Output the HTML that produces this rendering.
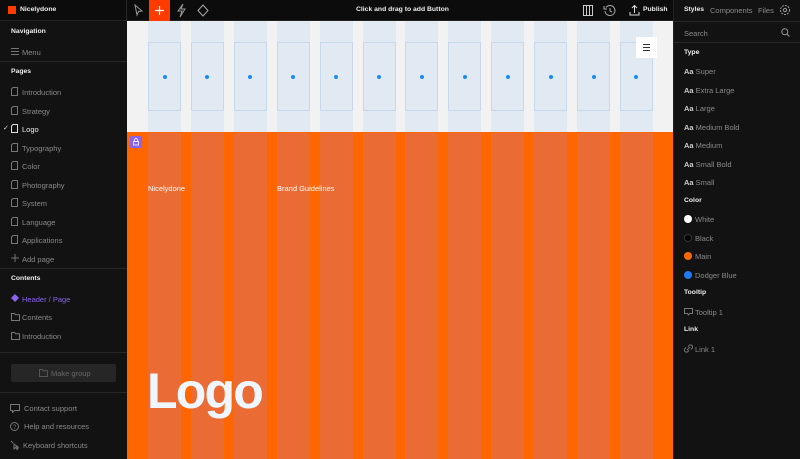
<!DOCTYPE html>
<html><head><meta charset="utf-8"><style>
*{margin:0;padding:0;box-sizing:border-box}
body{width:800px;height:459px;overflow:hidden;background:#111;font-family:"Liberation Sans",sans-serif;position:relative;color:#8a8a8a;font-size:7.5px}
.a{position:absolute}
.top{left:0;top:0;width:800px;height:21px;background:#0c0c0c;border-bottom:1px solid #222}
.side{left:0;top:22px;width:127px;height:437px;background:#121212}
.right{left:673px;top:0;width:127px;height:459px;background:#121212;border-left:1px solid #222}
.h{color:#eee;font-weight:bold;font-size:6.8px}
.it{font-size:7.5px;color:#8a8a8a;white-space:nowrap}
.sep{height:1px;background:#262626;position:absolute}
svg{position:absolute}
.col1{position:absolute;top:21px;height:111px;width:33px;background:#e1e9f2}
.box{position:absolute;top:42px;height:69px;width:33px;border:1px solid #c6d8ec}
.dot{position:absolute;top:75px;width:4px;height:4px;border-radius:50%;background:#1a8cf0}
.col2{position:absolute;top:133px;height:326px;width:33px;background:#eb6b35}
.sw{position:absolute;width:8px;height:8px;border-radius:50%}
</style></head><body>
<div class="a top"></div>
<div class="a" style="left:8px;top:6px;width:8px;height:8px;background:#ff3b00"></div>
<div class="a h" style="left:20px;top:6px">Nicelydone</div>
<div class="a" style="left:126px;top:0;width:1px;height:21px;background:#2a2a2a"></div>
<svg style="left:133px;top:4px" width="11" height="13" viewBox="0 0 11 13"><path d="M2 1 L9 7 L5.5 7.5 L4 11 Z" fill="none" stroke="#999" stroke-width="1"/></svg>
<div class="a" style="left:149px;top:0;width:21px;height:21px;background:#ff3b00"></div>
<svg style="left:154px;top:5px" width="11" height="11"><path d="M5.5 1v9M1 5.5h9" stroke="#fff" stroke-width="1.2"/></svg>
<svg style="left:176px;top:3px" width="11" height="15" viewBox="0 0 11 15"><path d="M7 1 L2 8 H6 L4 14 L9 6 H5 Z" fill="none" stroke="#999" stroke-width="1"/></svg>
<svg style="left:197px;top:4px" width="12" height="13"><path d="M6 1 L11 6.5 L6 12 L1 6.5 Z" fill="none" stroke="#aaa" stroke-width="1"/></svg>
<div class="a h" style="left:356px;top:6px">Click and drag to add Button</div>
<svg style="left:583px;top:5px" width="10" height="11"><rect x="0.5" y="0.5" width="9" height="10" fill="none" stroke="#ccc"/><path d="M3.5 0.5v10M6.5 0.5v10" stroke="#ccc"/></svg>
<svg style="left:603px;top:4px" width="13" height="13" viewBox="0 0 13 13"><path d="M3 3.5 A5 5 0 1 1 2 7" fill="none" stroke="#aaa"/><path d="M1 2v3h3" fill="none" stroke="#aaa"/><path d="M7 4v3l2 1" fill="none" stroke="#aaa"/></svg>
<svg style="left:629px;top:4px" width="11" height="12"><path d="M5.5 9V1.5M3 4l2.5-2.5L8 4M1 8v3h9V8" fill="none" stroke="#ddd" stroke-width="1"/></svg>
<div class="a h" style="left:643px;top:6px">Publish</div>

<div class="a side"></div>
<div class="a h" style="left:11px;top:28px">Navigation</div>
<svg style="left:11px;top:48px" width="8" height="7"><path d="M0 .5h8M0 3.5h8M0 6.5h8" stroke="#777"/></svg>
<div class="a it" style="left:22px;top:48px">Menu</div>
<div class="sep" style="left:0;top:61px;width:127px"></div>
<div class="a h" style="left:11px;top:68px">Pages</div>
<div id="pages"></div>
<div class="sep" style="left:0;top:268px;width:127px"></div>
<div class="a h" style="left:11px;top:275px">Contents</div>
<svg style="left:11px;top:294px" width="8" height="8"><path d="M4 0L8 4L4 8L0 4Z" fill="#8a63f0"/></svg>
<div class="a it" style="left:22px;top:295px;color:#8a63f0">Header / Page</div>
<svg style="left:11px;top:313px" width="9" height="8"><path d="M.5 .5h3l1 1.2h4v5.8h-8Z" fill="none" stroke="#777"/></svg>
<div class="a it" style="left:22px;top:313px">Contents</div>
<svg style="left:11px;top:332px" width="9" height="8"><path d="M.5 .5h3l1 1.2h4v5.8h-8Z" fill="none" stroke="#777"/></svg>
<div class="a it" style="left:22px;top:332px">Introduction</div>
<div class="sep" style="left:0;top:352px;width:127px"></div>
<div class="a" style="left:11px;top:364px;width:105px;height:18px;background:#262626;border-radius:2px"></div>
<svg style="left:39px;top:369px" width="9" height="8"><path d="M.5 .5h3l1 1.2h4v5.8h-8Z" fill="none" stroke="#555"/></svg>
<div class="a it" style="left:51px;top:369px;color:#666">Make group</div>
<div class="sep" style="left:0;top:392px;width:127px"></div>
<svg style="left:10px;top:404px" width="10" height="9"><path d="M.5 .5h9v6h-5l-2 2v-2h-2Z" fill="none" stroke="#777"/></svg>
<div class="a it" style="left:24px;top:404px">Contact support</div>
<svg style="left:10px;top:422px" width="9" height="9"><circle cx="4.5" cy="4.5" r="4" fill="none" stroke="#777"/><text x="3" y="7" font-size="6" fill="#777">?</text></svg>
<div class="a it" style="left:24px;top:422px">Help and resources</div>
<svg style="left:10px;top:440px" width="9" height="10"><path d="M1 1l2 2M4 4v5l1.5-1.5L7 9.5l1-1-1.5-1.5H8Z" fill="none" stroke="#777"/></svg>
<div class="a it" style="left:23px;top:441px">Keyboard shortcuts</div>

<div class="a" style="left:127px;top:21px;width:546px;height:111px;background:#f2f2f2"></div>
<div class="a" style="left:127px;top:132px;width:546px;height:327px;background:#ff6600"></div>
<div id="grid"></div>
<div class="a" style="left:636px;top:37px;width:21px;height:21px;background:#fff"></div>
<svg style="left:643px;top:44px" width="7" height="7"><path d="M0 .5h7M0 3.5h7M0 6.5h7" stroke="#333"/></svg>
<div class="a" style="left:130px;top:136px;width:12px;height:12px;background:#8a63f0;border-radius:2px"></div>
<svg style="left:133px;top:138px" width="6" height="8"><path d="M1.5 3.5V2a1.5 1.5 0 013 0v1.5" fill="none" stroke="#fff" stroke-width=".8"/><rect x=".5" y="3.5" width="5" height="3.5" fill="none" stroke="#fff" stroke-width=".8"/></svg>
<div class="a" style="left:148px;top:184px;color:#fff;font-size:7.5px">Nicelydone</div>
<div class="a" style="left:277px;top:184px;color:#fff;font-size:7.5px">Brand Guidelines</div>
<div class="a" style="left:147px;top:362px;color:#eef6ff;font-size:50px;font-weight:bold;letter-spacing:-1.8px">Logo</div>

<div class="a right"></div>
<div class="a h" style="left:684px;top:6px">Styles</div>
<div class="a it" style="left:710px;top:6px">Components</div>
<div class="a it" style="left:758px;top:6px">Files</div>
<svg style="left:779px;top:4px" width="12" height="12"><circle cx="6" cy="6" r="4.5" fill="none" stroke="#999" stroke-dasharray="2 1"/><circle cx="6" cy="6" r="1.6" fill="none" stroke="#999"/></svg>
<div class="sep" style="left:674px;top:21px;width:126px"></div>
<div class="a it" style="left:684px;top:29px">Search</div>
<svg style="left:781px;top:28px" width="9" height="9"><circle cx="3.8" cy="3.8" r="3" fill="none" stroke="#999"/><path d="M6 6l2.5 2.5" stroke="#999"/></svg>
<div class="sep" style="left:674px;top:42px;width:126px"></div>
<div class="a h" style="left:684px;top:49px">Type</div>
<div id="types"></div>
<div class="a h" style="left:684px;top:197px">Color</div>
<div class="sw" style="left:684px;top:215px;background:#fff"></div><div class="a it" style="left:695px;top:215px">White</div>
<div class="sw" style="left:684px;top:234px;background:#000;border:1px solid #333"></div><div class="a it" style="left:695px;top:234px">Black</div>
<div class="sw" style="left:684px;top:252px;background:#ff6600"></div><div class="a it" style="left:695px;top:252px">Main</div>
<div class="sw" style="left:684px;top:271px;background:#1e7af0"></div><div class="a it" style="left:695px;top:271px">Dodger Blue</div>
<div class="a h" style="left:684px;top:289px">Tooltip</div>
<svg style="left:684px;top:308px" width="9" height="8"><path d="M.5 .5h8v5h-3l-1 1.5-1-1.5h-3Z" fill="none" stroke="#777"/></svg>
<div class="a it" style="left:695px;top:308px">Tooltip 1</div>
<div class="a h" style="left:684px;top:326px">Link</div>
<svg style="left:684px;top:344px" width="9" height="9"><path d="M4 2.5l1-1a2 2 0 013 3l-1 1M5 6.5l-1 1a2 2 0 01-3-3l1-1M3 6l3-3" fill="none" stroke="#777"/></svg>
<div class="a it" style="left:695px;top:345px">Link 1</div>

<script>
var p=["Introduction","Strategy","Logo","Typography","Color","Photography","System","Language","Applications"],h="";
p.forEach(function(n,i){var y=88+i*18.5;var l=n=="Logo";
h+='<svg style="left:11px;top:'+(y-1)+'px" width="7" height="9"><path d="M2 .5h4.5v8h-6v-6.5Z" fill="none" stroke="'+(l?'#ddd':'#777')+'"/></svg>';
if(l)h+='<div class="a" style="left:3px;top:'+(y-1)+'px;color:#ddd;font-size:7px">✓</div>';
h+='<div class="a it" style="left:22px;top:'+y+'px;'+(l?'color:#eee':'')+'">'+n+'</div>';});
h+='<svg style="left:11px;top:254px" width="8" height="8"><path d="M4 0v8M0 4h8" stroke="#777"/></svg><div class="a it" style="left:22px;top:254.5px">Add page</div>';
document.getElementById("pages").innerHTML=h;
var g="";for(var i=0;i<12;i++){var x=148+i*42.9;
g+='<div class="col1" style="left:'+x+'px"></div><div class="box" style="left:'+x+'px"></div><div class="dot" style="left:'+(x+14.5)+'px"></div><div class="col2" style="left:'+x+'px"></div>';}
document.getElementById("grid").innerHTML=g;
var t=["Super","Extra Large","Large","Medium Bold","Medium","Small Bold","Small"],s="";
t.forEach(function(n,i){var y=67+i*18.5;s+='<div class="a it" style="left:684px;top:'+y+'px"><b style="color:#ccc">Aa</b> '+n+'</div>';});
document.getElementById("types").innerHTML=s;
</script>
</body></html>
